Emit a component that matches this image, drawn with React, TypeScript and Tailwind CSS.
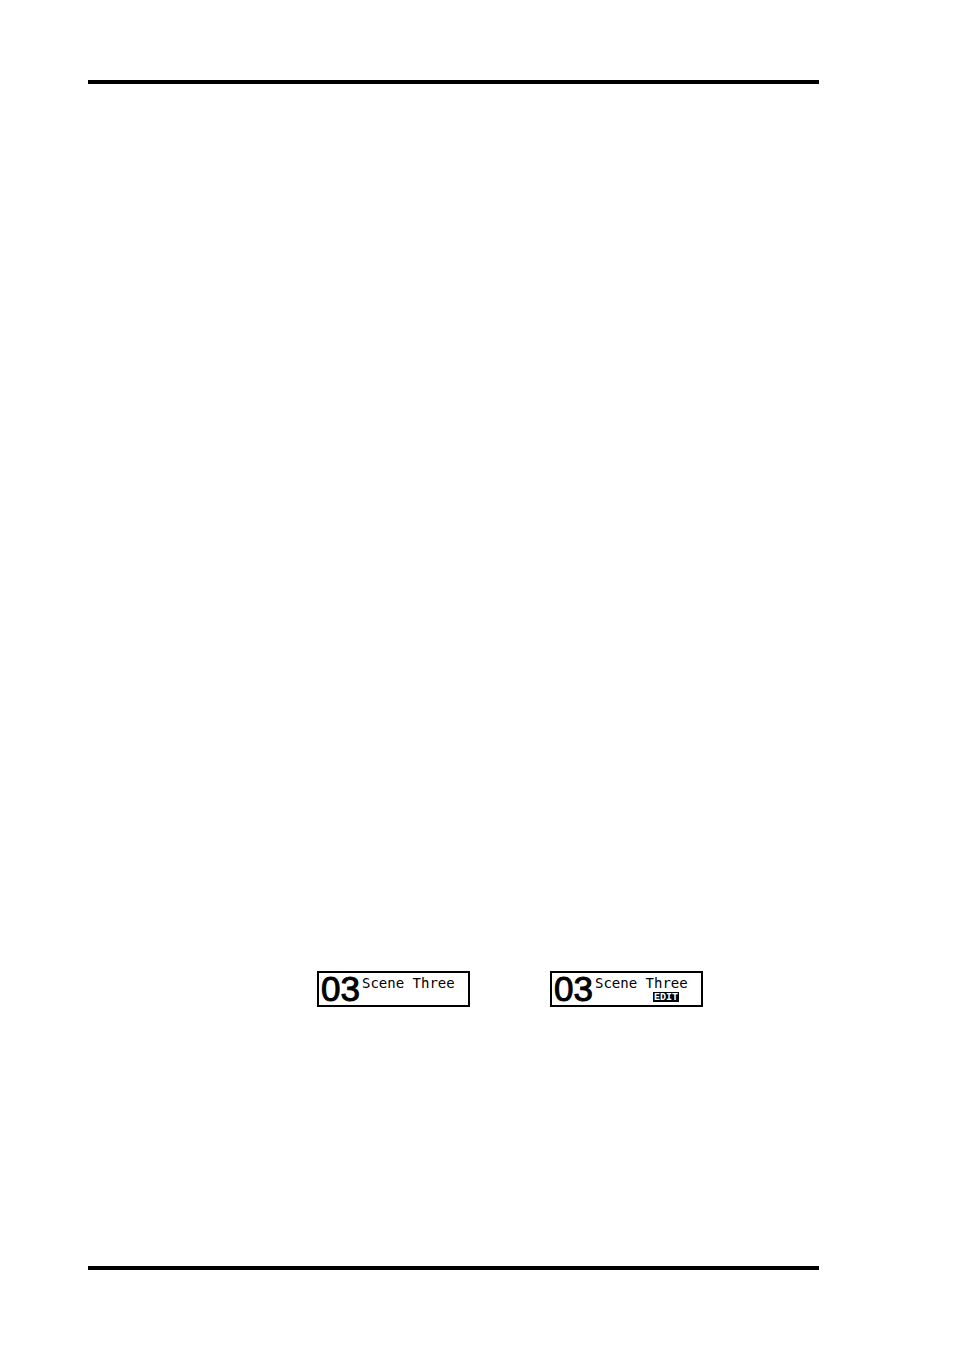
interface SceneDisplayProps {
  number: string;
  name: string;
  edited?: boolean;
}

function SceneDisplay({ number, name, edited }: SceneDisplayProps) {
  return (
    <div className="flex h-9 w-[153px] border-2 border-black pl-0.5 text-black">
      <span className="w-[41px] shrink-0 font-['Liberation_Sans',sans-serif] text-[35px] leading-8 [-webkit-text-stroke:1px_black]">
        {number}
      </span>
      <div className="flex flex-col whitespace-nowrap pt-[3px]">
        <span className="font-['DejaVu_Sans_Mono',monospace] text-[14px] leading-[15px]">{name}</span>
        {edited && (
          <span className="mt-px ml-[58px] flex h-[10px] w-[26px] items-start justify-center bg-black font-['Liberation_Mono',monospace] text-[10px] leading-[12px] font-bold text-white">
            EDIT
          </span>
        )}
      </div>
    </div>
  );
}

export default function App() {
  return (
    <div className="flex min-h-screen flex-col bg-white py-20 pl-[88px] pr-[135px]">
      <hr className="border-t-4 border-black" />

      <main className="flex flex-1 items-end gap-20 pb-[259px] pl-[229px]">
        <SceneDisplay number="03" name="Scene Three" />
        <SceneDisplay number="03" name="Scene Three" edited />
      </main>

      <hr className="border-t-4 border-black" />
    </div>
  );
}
